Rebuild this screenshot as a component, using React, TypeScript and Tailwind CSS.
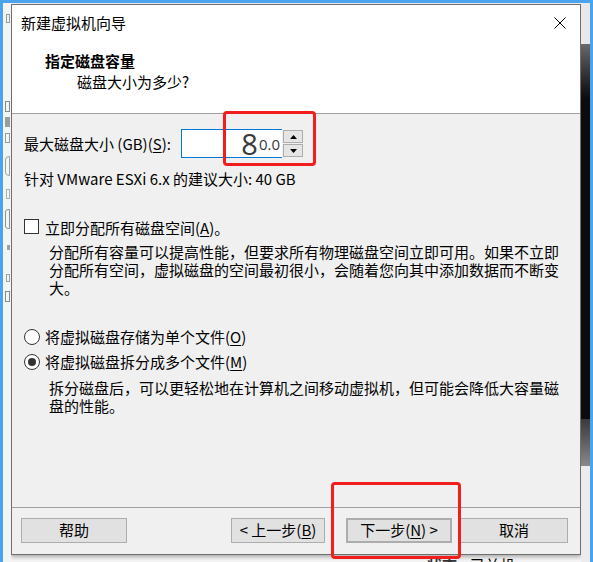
import React from "react";

// windows-style push button
function Btn({ children, className = "" }: { children: React.ReactNode; className?: string }) {
  return (
    <div className={`h-[25px] flex items-center justify-center bg-[#e1e1e1] border border-[#adadad] ${className}`}>
      {children}
    </div>
  );
}

function Key({ k }: { k: string }) {
  return <u className="underline underline-offset-2 decoration-1">{k}</u>;
}

function Radio({ checked }: { checked?: boolean }) {
  return (
    <div className="w-[16px] h-[16px] rounded-full border border-[#333] bg-white flex items-center justify-center shrink-0">
      {checked && <div className="w-[8px] h-[8px] rounded-full bg-[#333]" />}
    </div>
  );
}

export default function App() {
  return (
    <div className="relative w-[593px] h-[562px] overflow-hidden bg-[#4aa3ef] pt-[3px] px-[3px] font-['Noto_Sans_CJK_SC','Noto_Sans',sans-serif] text-[15px] text-black">
      <div className="h-[559px] grid grid-cols-[8px_570px_9px] bg-[#f4f4f4]">
        {/* background window peeking out on the left */}
        <div className="flex flex-col items-end pr-[1px]">
          <div className="mt-[11px] w-[4px] h-[9px] border border-[#9a9a9a]" />
          <div className="mt-[78px] w-[5px] h-[11px] border border-[#8a8a8a]" />
          <div className="mt-[5px] w-[5px] h-[10px] bg-[#9c9c9c]" />
          <div className="mt-[6px] w-[5px] h-[10px] border border-[#9a9a9a]" />
          <div className="mt-[13px] w-[5px] h-[20px] rounded-l-[4px] border border-[#a0a0a0]" />
          <div className="mt-[13px] w-[4px] h-[10px] border border-[#b0b0b0]" />
          <div className="mt-[10px] w-[5px] h-[20px] rounded-l-[3px] border border-[#909090]" />
          <div className="mt-[16px] w-[3px] h-[5px] bg-[#a0a0a0]" />
          <div className="mt-[24px] w-[4px] h-[8px] border border-[#a0a0a0]" />
          <div className="mt-[9px] w-[5px] h-[11px] border border-[#888]" />
        </div>

        <div className="flex flex-col overflow-hidden pb-[4px]">
          <div className="mt-[1px] h-[551px] shrink-0 flex flex-col border border-[#6f6f6f] bg-[#f0f0f0] shadow-[0_2px_4px_rgba(0,0,0,0.3)]">
            {/* title bar + wizard header */}
            <div className="h-[108px] bg-white flex flex-col">
              <div className="h-[36px] flex items-center justify-between pl-[9px] pr-[14px]">
                <span className="leading-[20px]">新建虚拟机向导</span>
                <svg width="12" height="12" viewBox="0 0 12 12">
                  <path d="M0.5 0.5 L11.5 11.5 M11.5 0.5 L0.5 11.5" stroke="#000" strokeWidth="1" />
                </svg>
              </div>
              <div className="pl-[33px] pt-[10px] leading-[20px]">
                <div className="font-bold">指定磁盘容量</div>
                <div className="pl-[32px] mt-[1px]">磁盘大小为多少?</div>
              </div>
            </div>
            <div className="h-px bg-[#a0a0a0]" />

            {/* body */}
            <div className="h-[393px] px-[12px] pt-[15px] leading-[20px]">
              <div className="flex items-center h-[29px]">
                <span className="w-[157px]">
                  最大磁盘大小 (GB)(<Key k="S" />):
                </span>
                <div className="w-[101px] h-[29px] bg-white border border-r-0 border-[#0078d7] flex items-center justify-end pr-[2px] text-[#3a3a3a]">
                  <span className="font-['Open_Sans',sans-serif] text-[29px] leading-[29px]">8</span>
                  <span className="font-['Open_Sans',sans-serif] text-[15px] leading-[16px] ml-[1px]">0.0</span>
                </div>
                <div className="w-[21px] h-[29px] flex flex-col justify-center gap-[1px] pl-[1px]">
                  <div className="w-[20px] h-[13px] border border-[#adadad] bg-[#e5e5e5] flex items-center justify-center">
                    <svg width="7" height="4" viewBox="0 0 7 4">
                      <path d="M3.5 0 L7 4 L0 4 Z" fill="#000" />
                    </svg>
                  </div>
                  <div className="w-[20px] h-[13px] border border-[#adadad] bg-[#e5e5e5] flex items-center justify-center">
                    <svg width="7" height="4" viewBox="0 0 7 4">
                      <path d="M0 0 L7 0 L3.5 4 Z" fill="#000" />
                    </svg>
                  </div>
                </div>
              </div>
              <div className="mt-[11px]">针对 VMware ESXi 6.x 的建议大小: 40 GB</div>

              <div className="mt-[27px] h-[20px] flex items-center">
                <div className="w-[15px] h-[15px] border border-[#333] bg-white shrink-0" />
                <span className="ml-[6px] mt-[3px]">
                  立即分配所有磁盘空间(<Key k="A" />)。
                </span>
              </div>
              <p className="mt-[7px] pl-[25px] leading-[18px]">
                分配所有容量可以提高性能，但要求所有物理磁盘空间立即可用。如果不立即
                <br />
                分配所有空间，虚拟磁盘的空间最初很小，会随着您向其中添加数据而不断变
                <br />
                大。
              </p>

              <div className="mt-[30px] h-[20px] flex items-center">
                <Radio />
                <span className="ml-[5px]">
                  将虚拟磁盘存储为单个文件(<Key k="O" />)
                </span>
              </div>
              <div className="mt-[5px] h-[20px] flex items-center">
                <Radio checked />
                <span className="ml-[5px]">
                  将虚拟磁盘拆分成多个文件(<Key k="M" />)
                </span>
              </div>
              <p className="mt-[7px] pl-[25px] leading-[18px]">
                拆分磁盘后，可以更轻松地在计算机之间移动虚拟机，但可能会降低大容量磁
                <br />
                盘的性能。
              </p>
            </div>
            <div className="h-px bg-[#a0a0a0]" />

            {/* footer buttons */}
            <div className="h-[46px] flex items-start pt-[10px] pl-[9px]">
              <Btn className="w-[106px]">帮助</Btn>
              <Btn className="w-[94px] ml-[104px]">
                &lt; 上一步(<Key k="B" />)
              </Btn>
              <Btn className="w-[106px] ml-[21px] border-2 border-[#0078d7]">
                下一步(<Key k="N" />) &gt;
              </Btn>
              <Btn className="w-[108px] ml-[8px]">取消</Btn>
            </div>
          </div>

          {/* status row of the window behind */}
          <div className="flex items-start leading-[18px] pt-[1px] pl-[416px]">
            <span className="font-bold text-[#333]">状态:</span>
            <span className="ml-[8px]">已关机</span>
          </div>
        </div>

        {/* scrollbar of the window behind */}
        <div className="flex flex-col bg-[#0c0c0c]">
          <div className="h-[41px] bg-[#e8e8e8]" />
          <div className="h-[55px] bg-linear-to-b from-[#6a6a6a] to-[#0c0c0c]" />
          <div className="h-[320px]" />
          <div className="h-[47px] bg-linear-to-b from-[#3a3a3a] to-[#8a8a8a]" />
          <div className="flex-1 bg-[#ececec]" />
        </div>
      </div>

      {/* red annotation frames */}
      <div className="absolute left-[223px] top-[111px] w-[93px] h-[55px] border-[3px] border-[#f21d1d] rounded-[4px]" />
      <div className="absolute left-[331px] top-[482px] w-[130px] h-[77px] border-[3px] border-[#f21d1d] rounded-[4px]" />
    </div>
  );
}
